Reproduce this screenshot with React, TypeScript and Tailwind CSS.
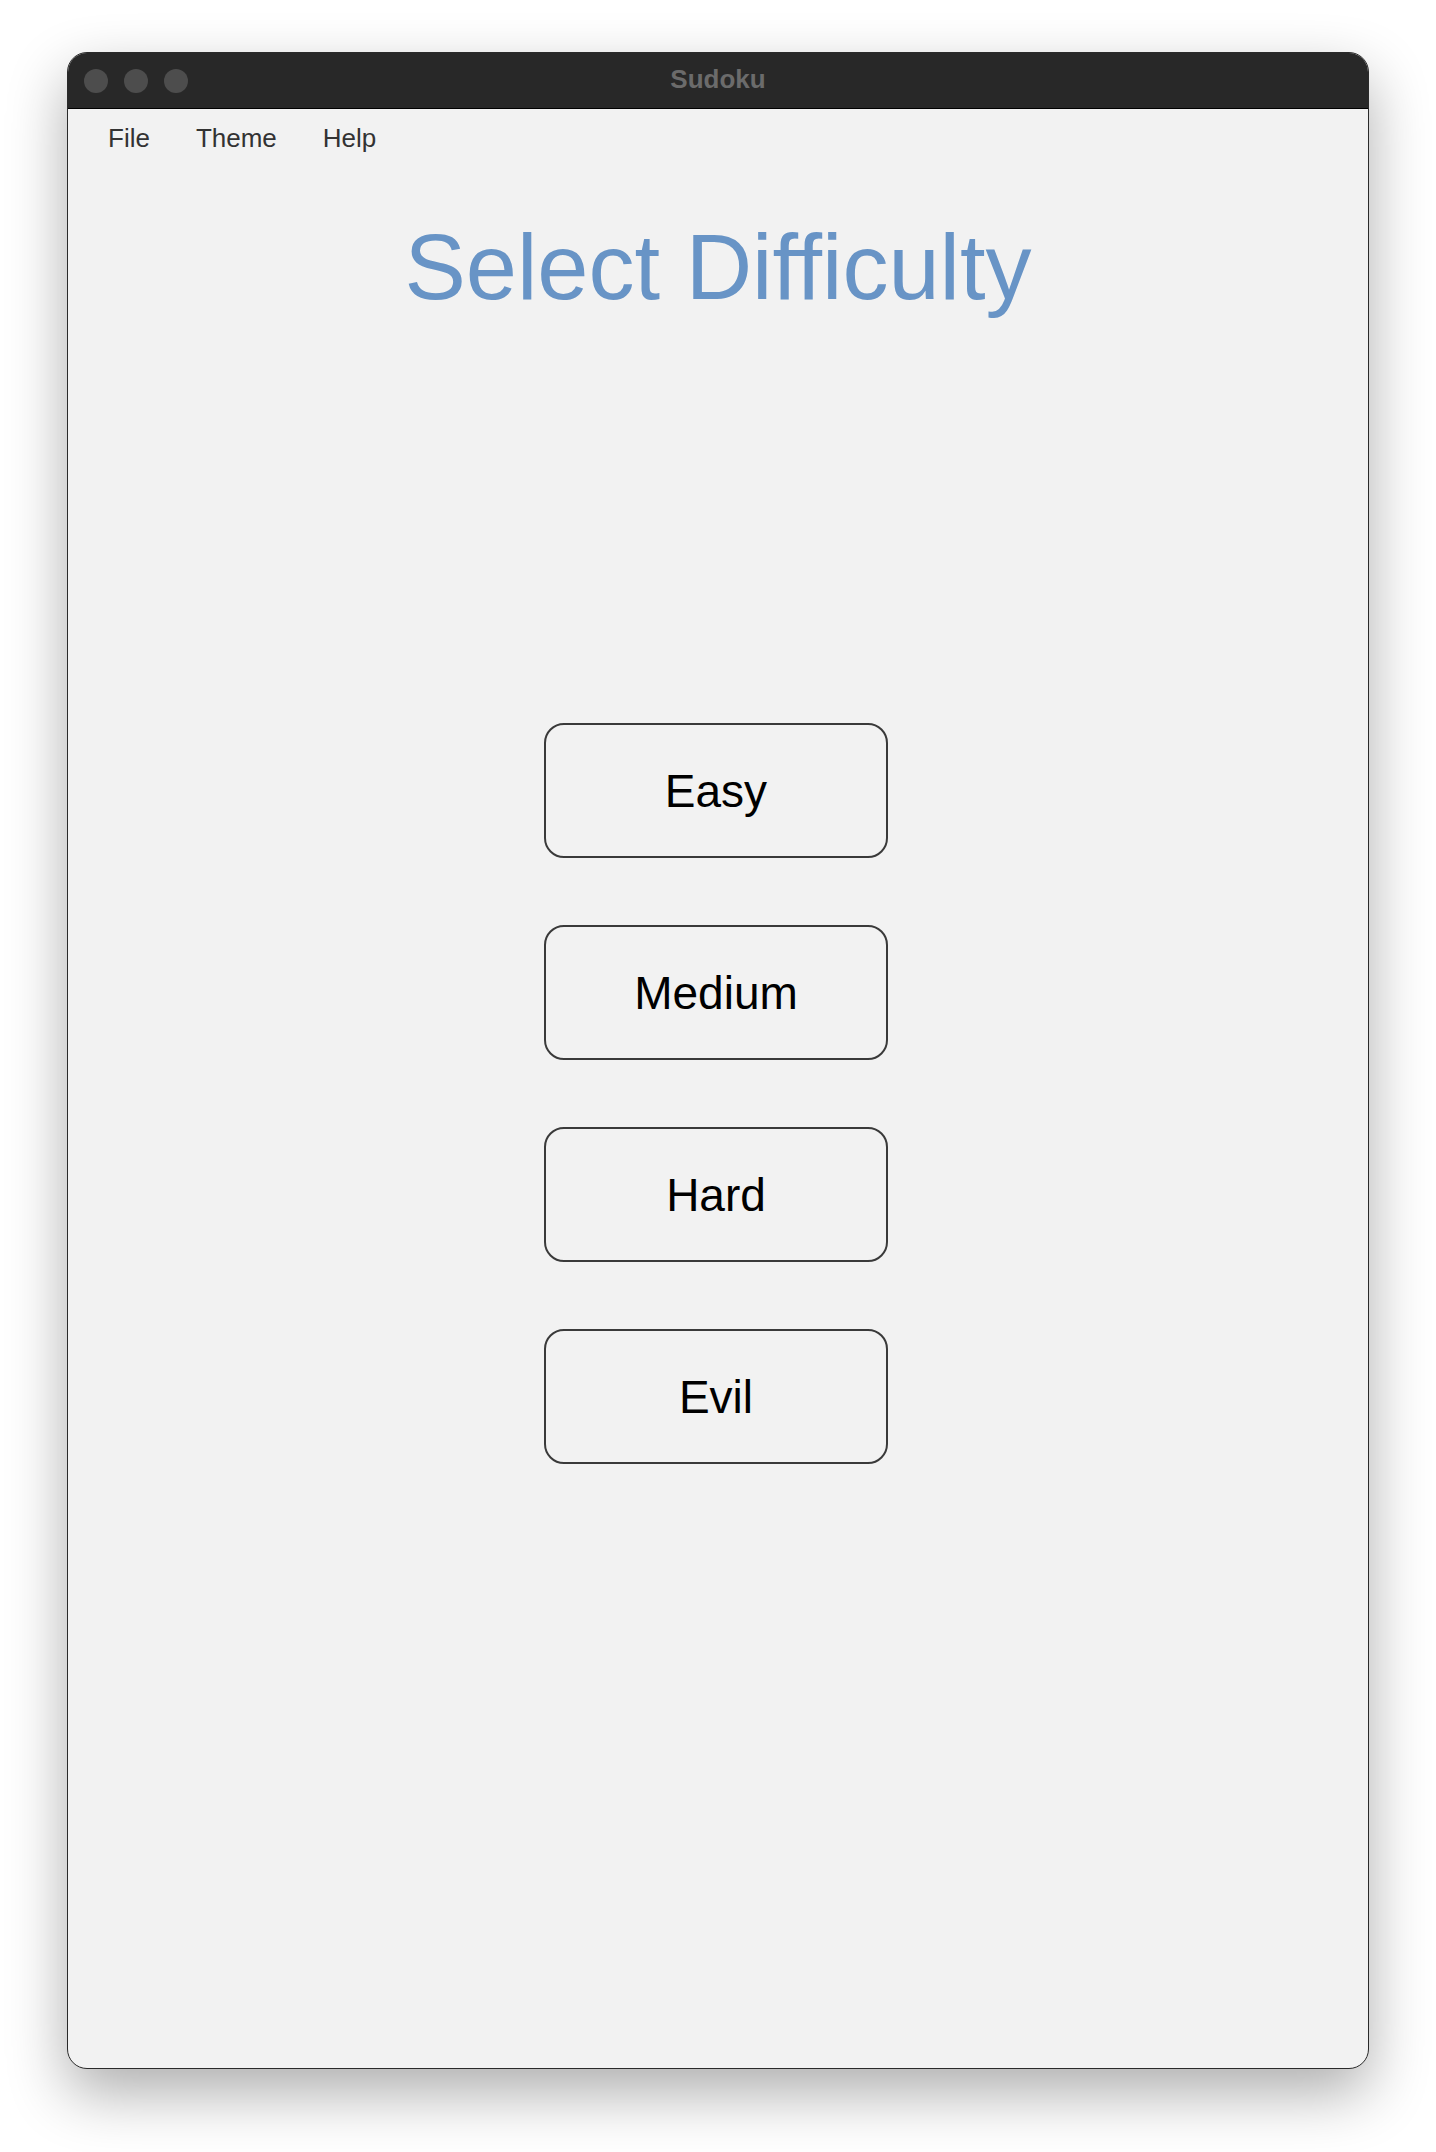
const levels = ['Easy', 'Medium', 'Hard', 'Evil'];

function TitleBar() {
  return (
    <div className="relative h-[56px] bg-[#282828] border-b border-black flex items-center shrink-0">
      <div className="flex gap-[16px] pl-[16px]">
        <span className="w-[24px] h-[24px] rounded-full bg-[#4d4d4d]" />
        <span className="w-[24px] h-[24px] rounded-full bg-[#4d4d4d]" />
        <span className="w-[24px] h-[24px] rounded-full bg-[#4d4d4d]" />
      </div>
      <div className="absolute inset-0 flex items-center justify-center pb-[4px] pointer-events-none">
        <span className="text-[26px] font-bold text-[#6b6b6b] leading-none">Sudoku</span>
      </div>
    </div>
  );
}

export default function App() {
  return (
    <div
      className="w-full min-h-[2152px] bg-white flex justify-center pt-[52px]"
      style={{ fontFamily: '"Liberation Sans", Arial, sans-serif' }}
    >
      <div className="w-[1302px] h-[2017px] rounded-[20px] overflow-hidden border border-[#2a2a2a] bg-[#f2f2f2] flex flex-col shadow-[0_24px_60px_rgba(0,0,0,0.32)]">
        <TitleBar />

        <nav className="flex gap-[46px] pl-[40px] pt-[16px] text-[26px] leading-none text-[#333333]">
          <span>File</span>
          <span>Theme</span>
          <span>Help</span>
        </nav>

        <h1 className="mt-[70px] text-center text-[92px] leading-none font-normal text-[#6894c6]">
          Select Difficulty
        </h1>

        <div className="mt-[410px] flex flex-col items-center gap-[67px] pr-[4px]">
          {levels.map((level) => (
            <button
              key={level}
              className="w-[344px] h-[135px] rounded-[20px] border-2 border-[#3a3a3a] bg-[#f2f2f2] text-[46px] leading-none text-black flex items-center justify-center"
            >
              {level}
            </button>
          ))}
        </div>
      </div>
    </div>
  );
}
